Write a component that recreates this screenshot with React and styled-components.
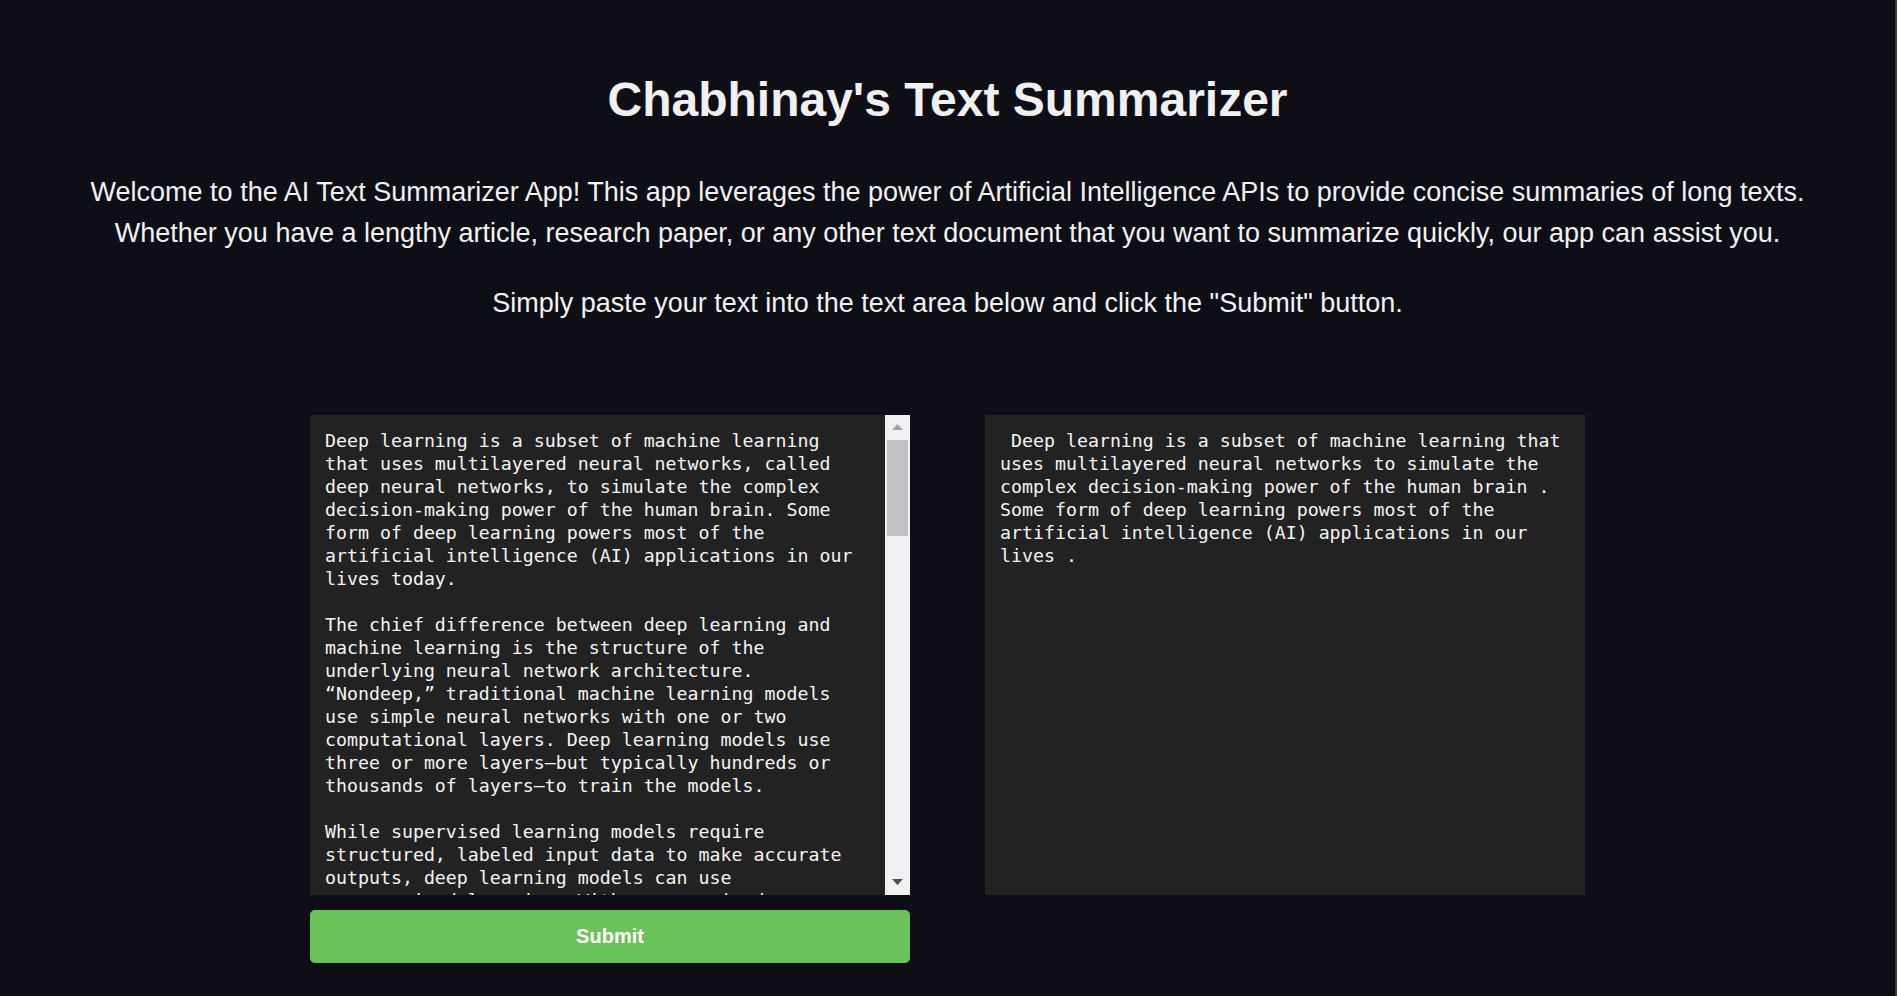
import React from 'react';
import styled, { createGlobalStyle } from 'styled-components';

const GlobalStyle = createGlobalStyle`
  html, body {
    margin: 0;
    padding: 0;
    background: #0e0e17;
  }
  * {
    box-sizing: border-box;
  }
`;

const Page = styled.div`
  min-height: 100vh;
  padding: 72px 0 40px;
  border-right: 2px solid #3c3c3c;
  font-family: "Liberation Sans", Arial, sans-serif;
  color: #f2f2f2;
  text-align: center;
`;

const Title = styled.h1`
  margin: 0;
  font-size: 48px;
  line-height: 55px;
  font-weight: 700;
  color: #f0f0f0;
`;

const Intro = styled.p`
  margin: ${(p) => p.$top}px auto 0;
  font-size: 27px;
  line-height: 40.5px;
  max-width: 1780px;
`;

const Panels = styled.div`
  display: flex;
  justify-content: center;
  align-items: flex-start;
  gap: 75px;
  margin-top: 91px;
`;

const Column = styled.div`
  display: flex;
  flex-direction: column;
  gap: 15px;
  width: 600px;
`;

const Editor = styled.div`
  display: flex;
  height: 480px;
  background: #222222;
`;

const mono = `
  padding: 14px 15px;
  color: #f4f4f4;
  font-family: "DejaVu Sans Mono", "Liberation Mono", monospace;
  font-size: 18.25px;
  line-height: 23px;
  text-align: left;
`;

const Input = styled.textarea`
  ${mono}
  flex: 1;
  min-width: 0;
  height: 100%;
  margin: 0;
  background: transparent;
  border: none;
  resize: none;
  outline: none;
  overflow-y: scroll;
  scrollbar-width: none;
  &::-webkit-scrollbar {
    display: none;
  }
`;

const ScrollTrack = styled.div`
  width: 25px;
  flex-shrink: 0;
  display: flex;
  flex-direction: column;
  background: #f1f1f1;
`;

const ScrollButton = styled.div`
  height: 25px;
  flex-shrink: 0;
  display: flex;
  align-items: center;
  justify-content: center;
`;

const ScrollThumb = styled.div`
  height: 96px;
  margin: 0 2px;
  background: #c1c1c1;
`;

const Spacer = styled.div`
  flex: 1;
`;

const Output = styled.div`
  ${mono}
  width: 600px;
  height: 480px;
  background: #222222;
  white-space: pre-wrap;
  overflow-y: auto;
`;

const SubmitButton = styled.button`
  height: 53px;
  width: 100%;
  border: none;
  border-radius: 5px;
  background: #6cc25a;
  color: #ffffff;
  font-family: "Liberation Sans", Arial, sans-serif;
  font-weight: 700;
  font-size: 20px;
  cursor: pointer;
`;

const Arrow = ({ up, color }) => (
  <svg width="11" height="6" viewBox="0 0 11 6">
    <polygon points={up ? '5.5,0 11,6 0,6' : '0,0 11,0 5.5,6'} fill={color} />
  </svg>
);

const sourceText = `Deep learning is a subset of machine learning that uses multilayered neural networks, called deep neural networks, to simulate the complex decision-making power of the human brain. Some form of deep learning powers most of the artificial intelligence (AI) applications in our lives today.

The chief difference between deep learning and machine learning is the structure of the underlying neural network architecture. “Nondeep,” traditional machine learning models use simple neural networks with one or two computational layers. Deep learning models use three or more layers—but typically hundreds or thousands of layers—to train the models.

While supervised learning models require structured, labeled input data to make accurate outputs, deep learning models can use unsupervised learning. With unsupervised learning, deep learning models can extract the characteristics, features and relationships they need to make accurate outputs from raw, unstructured data. Additionally, these models can even evaluate and refine their outputs for increased precision.

Deep learning is an aspect of data science that drives many applications and services that improve automation, performing analytical and physical tasks without human intervention. This enables many everyday products and services, such as digital assistants, voice-enabled TV remotes, credit card fraud detection, self-driving cars and generative AI.

Neural networks, or artificial neural networks, attempt to mimic the human brain through a combination of data inputs, weights and bias, all acting as silicon neurons. These elements work together to accurately recognize, classify and describe objects within the data.

Deep neural networks consist of multiple layers of interconnected nodes, each building on the previous layer to refine and optimize the prediction or categorization. This progression of computations through the network is called forward propagation. The input and output layers of a deep neural network are called visible layers. The input layer is where the deep learning model ingests the data for processing, and the output layer is where the final prediction or classification is made.

Another process called backpropagation uses algorithms, such as gradient descent, to calculate errors in predictions, and then adjusts the weights and biases of the function by moving backwards through the layers to train the model. Together, forward propagation and backpropagation enable a neural network to make predictions and correct for any errors. Over time, the algorithm becomes gradually more accurate.

Deep learning requires a tremendous amount of computing power. High-performance graphical processing units (GPUs) are ideal because they can handle a large volume of calculations in multiple cores with copious memory available. Distributed cloud computing might also assist. This level of computing power is necessary to train deep algorithms through deep learning. However, managing multiple GPUs on premises can create a large demand on internal resources and be incredibly costly to scale.

For software requirements, most deep learning apps are coded with one of these three learning frameworks: JAX, PyTorch or TensorFlow.

Deep learning algorithms are incredibly complex, and there are different types of neural networks to address specific problems or datasets.`;

const summaryText = ` Deep learning is a subset of machine learning that uses multilayered neural networks to simulate the complex decision-making power of the human brain . Some form of deep learning powers most of the artificial intelligence (AI) applications in our lives .`;

const TRACK = 430;
const THUMB = 96;

export default function App() {
  const [text, setText] = React.useState(sourceText);
  const [thumbTop, setThumbTop] = React.useState(0);

  const handleScroll = (e) => {
    const el = e.target;
    const max = el.scrollHeight - el.clientHeight;
    setThumbTop(max > 0 ? (el.scrollTop / max) * (TRACK - THUMB) : 0);
  };

  return (
    <>
      <GlobalStyle />
      <Page>
        <Title>Chabhinay's Text Summarizer</Title>
        <Intro $top={45}>
          Welcome to the AI Text Summarizer App! This app leverages the power of Artificial Intelligence APIs to provide concise summaries of long texts.
          <br />
          Whether you have a lengthy article, research paper, or any other text document that you want to summarize quickly, our app can assist you.
        </Intro>
        <Intro $top={30}>
          Simply paste your text into the text area below and click the "Submit" button.
        </Intro>
        <Panels>
          <Column>
            <Editor>
              <Input
                value={text}
                onChange={(e) => setText(e.target.value)}
                onScroll={handleScroll}
              />
              <ScrollTrack>
                <ScrollButton>
                  <Arrow up color="#a3a3a3" />
                </ScrollButton>
                <ScrollThumb style={{ marginTop: thumbTop }} />
                <Spacer />
                <ScrollButton>
                  <Arrow color="#505050" />
                </ScrollButton>
              </ScrollTrack>
            </Editor>
            <SubmitButton type="button">Submit</SubmitButton>
          </Column>
          <Output>{summaryText}</Output>
        </Panels>
      </Page>
    </>
  );
}
